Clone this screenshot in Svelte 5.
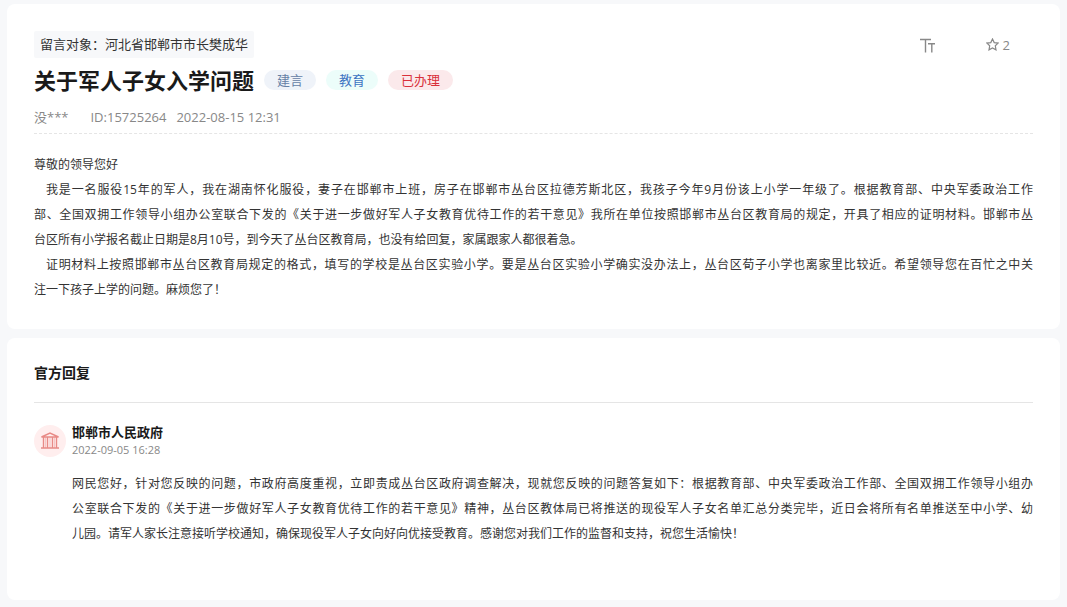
<script lang="ts">
    interface Line {
        text: string;
        full?: boolean; // runs to the right margin
        indent?: boolean; // first line of a paragraph
    }

    interface Tag {
        label: string;
        kind: string;
    }

    const tags: Tag[] = [
        { label: "建言", kind: "type" },
        { label: "教育", kind: "field" },
        { label: "已办理", kind: "state" },
    ];

    const message: Line[] = [
        { text: "尊敬的领导您好" },
        {
            text: "我是一名服役15年的军人，我在湖南怀化服役，妻子在邯郸市上班，房子在邯郸市丛台区拉德芳斯北区，我孩子今年9月份该上小学一年级了。根据教育部、中央军委政治工作",
            full: true,
            indent: true,
        },
        {
            text: "部、全国双拥工作领导小组办公室联合下发的《关于进一步做好军人子女教育优待工作的若干意见》我所在单位按照邯郸市丛台区教育局的规定，开具了相应的证明材料。邯郸市丛",
            full: true,
        },
        {
            text: "台区所有小学报名截止日期是8月10号，到今天了丛台区教育局，也没有给回复，家属跟家人都很着急。",
        },
        {
            text: "证明材料上按照邯郸市丛台区教育局规定的格式，填写的学校是丛台区实验小学。要是丛台区实验小学确实没办法上，丛台区荀子小学也离家里比较近。希望领导您在百忙之中关",
            full: true,
            indent: true,
        },
        { text: "注一下孩子上学的问题。麻烦您了！" },
    ];

    const reply: Line[] = [
        {
            text: "网民您好，针对您反映的问题，市政府高度重视，立即责成丛台区政府调查解决，现就您反映的问题答复如下：根据教育部、中央军委政治工作部、全国双拥工作领导小组办",
            full: true,
        },
        {
            text: "公室联合下发的《关于进一步做好军人子女教育优待工作的若干意见》精神，丛台区教体局已将推送的现役军人子女名单汇总分类完毕，近日会将所有名单推送至中小学、幼",
            full: true,
        },
        {
            text: "儿园。请军人家长注意接听学校通知，确保现役军人子女向好向优接受教育。感谢您对我们工作的监督和支持，祝您生活愉快！",
        },
    ];
</script>

{#snippet lines(items: Line[])}
    {#each items as line}
        <p class:full={line.full} class:indent={line.indent}>{line.text}</p>
    {/each}
{/snippet}

<main>
    <article class="card">
        <div class="top">
            <span class="target">留言对象：河北省邯郸市市长樊成华</span>
            <div class="tools">
                <button aria-label="字号">
                    <svg width="16" height="16" viewBox="0 0 16 16">
                        <path
                            stroke-width="1.4"
                            d="M0 2.5h11M5.5 2.5V15.5M8 6.7h7M11.8 6.7V15.5"
                        />
                    </svg>
                </button>
                <button>
                    <svg width="13" height="13" viewBox="0 0 13 13">
                        <path
                            stroke-width="1.2"
                            d="M6.5 1l1.7 3.6 3.9.5-2.8 2.7.7 4.1-3.5-1.9L3 11.9l.7-4.1L.9 5.1l3.9-.5z"
                        />
                    </svg>
                    <span>2</span>
                </button>
            </div>
        </div>

        <div class="title">
            <h1>关于军人子女入学问题</h1>
            {#each tags as tag}
                <span class="tag {tag.kind}">{tag.label}</span>
            {/each}
        </div>

        <div class="meta">
            <span class="author">没***</span>
            <span>ID:15725264</span>
            <time>2022-08-15 12:31</time>
        </div>

        <div class="text message">{@render lines(message)}</div>
    </article>

    <section class="card answer">
        <h2>官方回复</h2>
        <div class="office">
            <span class="avatar">
                <svg width="20" height="18" viewBox="0 0 20 18">
                    <path
                        stroke-width="1.4"
                        d="M1.5 5L10 1l8.500 4zM1 16h18M3.500 5.500v10.500M7.500 5.500v10.500M12.500 5.500v10.500M16.500 5.500v10.500"
                    />
                    <path class="thin" d="M5.500 5.500v10.500M10 5.500v10.500M14.500 5.500v10.500" />
                </svg>
            </span>
            <div>
                <h3>邯郸市人民政府</h3>
                <time>2022-09-05 16:28</time>
            </div>
        </div>
        <div class="text reply">{@render lines(reply)}</div>
    </section>
</main>

<style>
    :global(body) {
        margin: 0;
        background: #f7f8fa;
    }

    main {
        display: flex;
        flex-direction: column;
        gap: 9px;
        padding: 4px 7px 7px;
        font-family: "Open Sans", "Noto Sans CJK SC", sans-serif;
        font-size: 13px;
        color: #333;
    }

    h1,
    h2,
    h3,
    p {
        margin: 0;
    }

    .card {
        padding: 27px;
        background: #fff;
        border-radius: 8px;
    }

    .top {
        display: flex;
        justify-content: space-between;
        align-items: center;
    }

    .target {
        padding: 0 6px;
        line-height: 27px;
        background: #f7f8fa;
        border-radius: 2px;
    }

    .tools {
        display: flex;
        gap: 50px;
        padding-right: 23px;
    }

    button {
        display: flex;
        align-items: center;
        gap: 4px;
        padding: 0;
        border: none;
        background: none;
        font-family: inherit;
        font-size: 13px;
        color: #888;
        cursor: pointer;
    }

    svg {
        fill: none;
        stroke: currentColor;
    }

    .title {
        display: flex;
        align-items: center;
        gap: 10px;
        line-height: 44px;
    }

    h1 {
        font-size: 22px;
        color: #1a1a1a;
    }

    .tag {
        padding: 0 13px;
        line-height: 20px;
        border-radius: 10px;
    }

    .type {
        color: #6681a6;
        background: #eff3f9;
    }

    .field {
        color: #3d74c2;
        background: #ecfdfa;
    }

    .state {
        color: #d9303a;
        background: #fbe9eb;
    }

    .meta {
        display: flex;
        gap: 10px;
        line-height: 31px;
        color: #888;
        border-bottom: 1px dashed #e5e5e5;
    }

    .author {
        margin-right: 12px;
    }

    .text {
        font-size: 12px;
        line-height: 25px;
    }

    .message {
        padding-top: 18px;
    }

    .full {
        text-align: justify;
        text-align-last: justify;
    }

    .indent {
        text-indent: 12px;
    }

    .answer {
        padding-bottom: 54px;
    }

    h2 {
        padding-bottom: 21px;
        border-bottom: 1px solid #e5e5e5;
        font-size: 14px;
        line-height: 16px;
        color: #1a1a1a;
    }

    .office {
        display: flex;
        align-items: center;
        gap: 6px;
        padding-top: 20px;
    }

    .avatar {
        display: flex;
        align-items: center;
        justify-content: center;
        width: 32px;
        height: 32px;
        border-radius: 50%;
        color: #e88a86;
        background: #ffeeee;
    }

    .thin {
        opacity: 0.4;
    }

    h3 {
        font-size: 13px;
        line-height: 18px;
        color: #1a1a1a;
    }

    .office time {
        display: block;
        font-size: 11px;
        line-height: 18px;
        color: #888;
    }

    .reply {
        padding: 12px 0 0 38px;
    }
</style>
